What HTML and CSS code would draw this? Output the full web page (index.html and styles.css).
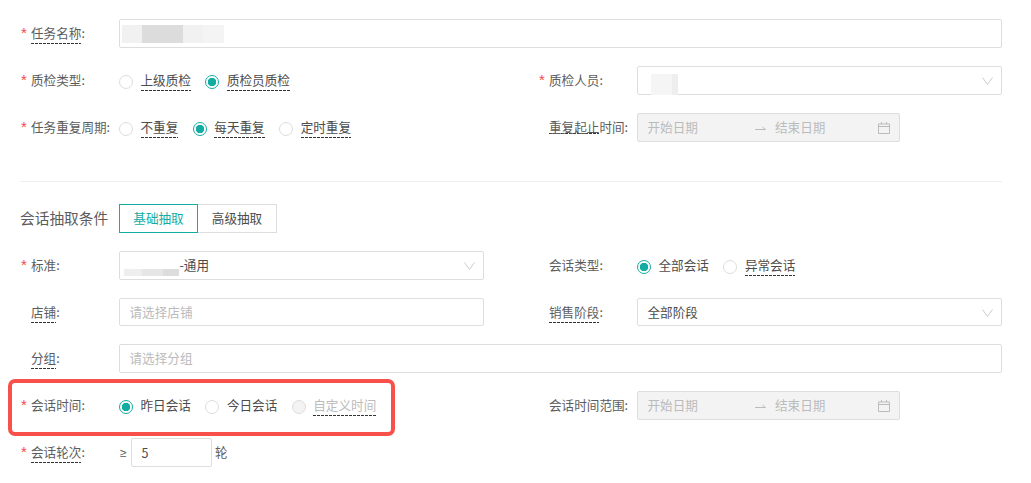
FILE: index.html

```html
<!DOCTYPE html>
<html lang="zh-CN">
<head>
    <meta charset="UTF-8">
    <title>任务设置</title>
    <link rel="stylesheet" href="styles.css">
</head>
<body>
    <div class="form">
        <div class="row">
            <div class="label req"><span class="tip">任务名称</span>:</div>
            <div class="input">
                <i class="mosaic w20 m1"></i><i class="mosaic w41 m2"></i><i class="mosaic w20 m1"></i><i class="mosaic w21 m3"></i>
            </div>
        </div>

        <div class="grid">
            <div class="row">
                <div class="label req">质检类型:</div>
                <div class="radios">
                    <span class="radio"></span><span class="text"><span class="tip">上级质检</span></span>
                    <span class="radio on"></span><span class="text"><span class="tip">质检员质检</span></span>
                </div>
            </div>
            <div class="row">
                <div class="label req">质检人员:</div>
                <div class="input select">
                    <i class="person"></i>
                    <svg class="arrow" viewBox="0 0 11 8"><path d="M.5 .5l5 7 5-7"/></svg>
                </div>
            </div>
            <div class="row">
                <div class="label req">任务重复周期:</div>
                <div class="radios">
                    <span class="radio"></span><span class="text"><span class="tip">不重复</span></span>
                    <span class="radio on"></span><span class="text"><span class="tip">每天重复</span></span>
                    <span class="radio"></span><span class="text"><span class="tip">定时重复</span></span>
                </div>
            </div>
            <div class="row">
                <div class="label"><span class="tip tight">重复起止</span>时间:</div>
                <div class="input range">
                    <span class="date">开始日期</span>
                    <svg class="to" viewBox="0 0 11 6"><path d="M0 4.500h10.500M7.500 2l3 2.500"/></svg>
                    <span class="date">结束日期</span>
                    <svg class="cal" viewBox="0 0 12 12"><path d="M.5 2h11v9.500H.5zM.5 4.500h11M3.500 0v2M8.500 0v2"/></svg>
                </div>
            </div>
        </div>

        <div class="divider"></div>

        <div class="row">
            <div class="label title">会话抽取条件</div>
            <div class="tabs">
                <div class="tab active">基础抽取</div>
                <div class="tab">高级抽取</div>
            </div>
        </div>

        <div class="grid tight">
            <div class="row">
                <div class="label req">标准:</div>
                <div class="input select">
                    <span class="value std">-通用</span>
                    <i class="mosaic-std"></i>
                    <svg class="arrow" viewBox="0 0 11 8"><path d="M.5 .5l5 7 5-7"/></svg>
                </div>
            </div>
            <div class="row">
                <div class="label">会话类型:</div>
                <div class="radios">
                    <span class="radio on"></span><span class="text">全部会话</span>
                    <span class="radio"></span><span class="text"><span class="tip">异常会话</span></span>
                </div>
            </div>
            <div class="row short">
                <div class="label"><span class="tip">店铺</span>:</div>
                <div class="input"><span class="holder">请选择店铺</span></div>
            </div>
            <div class="row short">
                <div class="label"><span class="tip">销售阶段</span>:</div>
                <div class="input select">
                    <span class="value">全部阶段</span>
                    <svg class="arrow" viewBox="0 0 11 8"><path d="M.5 .5l5 7 5-7"/></svg>
                </div>
            </div>
        </div>

        <div class="row">
            <div class="label"><span class="tip">分组</span>:</div>
            <div class="input"><span class="holder">请选择分组</span></div>
        </div>

        <div class="grid">
            <div class="row">
                <div class="label req">会话时间:</div>
                <div class="radios">
                    <span class="radio on"></span><span class="text">昨日会话</span>
                    <span class="radio"></span><span class="text">今日会话</span>
                    <span class="radio off"></span><span class="text muted"><span class="tip">自定义时间</span></span>
                </div>
                <div class="redbox"></div>
            </div>
            <div class="row">
                <div class="label">会话时间范围:</div>
                <div class="input range">
                    <span class="date">开始日期</span>
                    <svg class="to" viewBox="0 0 11 6"><path d="M0 4.500h10.500M7.500 2l3 2.500"/></svg>
                    <span class="date">结束日期</span>
                    <svg class="cal" viewBox="0 0 12 12"><path d="M.5 2h11v9.500H.5zM.5 4.500h11M3.500 0v2M8.500 0v2"/></svg>
                </div>
            </div>
        </div>

        <div class="row">
            <div class="label req"><span class="tip">会话轮次</span>:</div>
            <div class="turns">
                <span class="ge">≥</span>
                <div class="input num">5</div>
                <span class="unit">轮</span>
            </div>
        </div>
    </div>
</body>
</html>
```

FILE: styles.css

```css
* {
    margin: 0;
    padding: 0;
    box-sizing: border-box;
}

body {
    font-family: "Noto Sans CJK SC", "Liberation Sans", sans-serif;
    font-size: 12.6px;
    color: #5c5c5c;
    background-color: #fff;
}

.form {
    width: 1031px;
    padding: 19px 29px 0 20px;
}

.grid {
    display: grid;
    grid-template-columns: 464px 464px;
    column-gap: 54px;
}

.row {
    display: flex;
    align-items: center;
    height: 29px;
    margin-bottom: 18px;
    position: relative;
}

.row.short {
    height: 28px;
}

.label {
    flex: none;
    width: 99px;
    padding: 0 0 2px 11px;
    position: relative;
    white-space: nowrap;
}

.label.req::before {
    content: "*";
    position: absolute;
    left: 1px;
    top: 1px;
    font-family: "Liberation Sans", sans-serif;
    font-size: 15px;
    color: #f5474b;
}

.label.title {
    padding-left: 0;
    font-size: 14.7px;
}

.tip {
    padding-bottom: 2px;
    background: repeating-linear-gradient(90deg, #333 0 3px, transparent 3px 4px) 0 100% / 100% 1px no-repeat;
}

.tip.tight {
    background-position: 0 calc(100% - 4px);
}

.input {
    flex: 1;
    display: flex;
    align-items: center;
    height: 100%;
    padding: 0 9.5px;
    border: 1px solid #ddd;
    border-radius: 2px;
    background-color: #fff;
    color: #4c4c4c;
    position: relative;
}

.input:has(.mosaic) {
    padding: 0 2px;
}

.mosaic {
    height: 18px;
}

.w20 { width: 20px; }
.w21 { width: 21px; }
.w41 { width: 41px; }
.m1 { background-color: #f1f1f1; }
.m2 { background-color: #dcdcdc; }
.m3 { background-color: #f4f4f4; }

.person {
    position: absolute;
    left: 13px;
    top: 7px;
    width: 27px;
    height: 21px;
    background: linear-gradient(90deg, #f5f5f5 21px, #eee 21px);
}

/* masked part of the standard name */
.mosaic-std {
    position: absolute;
    left: 4px;
    top: 0;
    width: 55px;
    height: 24px;
    background:
        linear-gradient(#fff 17px, transparent 17px),
        linear-gradient(90deg, #eee 18px, #e6e6e6 18px 39px, #ddd 39px);
}

.value {
    padding-bottom: 2px;
    color: #4c4c4c;
}

.value.std {
    margin-left: 50px;
}

.holder {
    padding-bottom: 2px;
    color: #bbb;
}

.select .arrow {
    position: absolute;
    right: 8px;
    top: 10px;
    width: 11px;
    height: 8px;
    fill: none;
    stroke: #ccc;
}

.radios {
    display: flex;
    align-items: center;
}

.radio {
    flex: none;
    width: 14px;
    height: 14px;
    margin: 2px 7.5px 0 0;
    border: 1px solid #ddd;
    border-radius: 50%;
    background-color: #fff;
}

.radio.on {
    border-color: #13aca3;
    background: radial-gradient(circle, #13aca3 4px, #fff 4.5px);
}

.radio.off {
    background-color: #f3f3f3;
}

.text {
    margin-right: 14.5px;
    padding-bottom: 2px;
    color: #4c4c4c;
}

.text.muted {
    color: #bbb;
}

.range {
    flex: none;
    width: 263px;
    background-color: #f3f3f3;
    color: #bbb;
}

.date {
    width: 57px;
    padding-bottom: 2px;
}

.to {
    width: 11px;
    height: 6px;
    margin: 0 9.5px 0 50px;
    fill: none;
    stroke: #bbb;
}

.cal {
    width: 12px;
    height: 12px;
    margin-left: auto;
    fill: none;
    stroke: #bbb;
}

.divider {
    height: 1px;
    margin: 21px 0 22px;
    background-color: #eee;
}

.tabs {
    display: flex;
    height: 100%;
}

.tab {
    width: 79px;
    display: flex;
    align-items: center;
    justify-content: center;
    padding-bottom: 2px;
    border: 1px solid #ddd;
    color: #4c4c4c;
}

.tab + .tab {
    border-left: 0;
}

.tab.active {
    border-color: #13aca3;
    color: #13aca3;
}

.redbox {
    position: absolute;
    left: -12px;
    top: -12px;
    width: 387px;
    height: 57px;
    border: 4px solid #f8504b;
    border-radius: 7px;
}

.turns {
    display: flex;
    align-items: center;
    height: 100%;
}

.ge {
    width: 12px;
    padding-left: 1px;
    font-family: "Liberation Sans", sans-serif;
    font-size: 12px;
}

.num {
    flex: none;
    width: 81px;
}

.unit {
    margin-left: 3px;
    padding-bottom: 2px;
}
```
